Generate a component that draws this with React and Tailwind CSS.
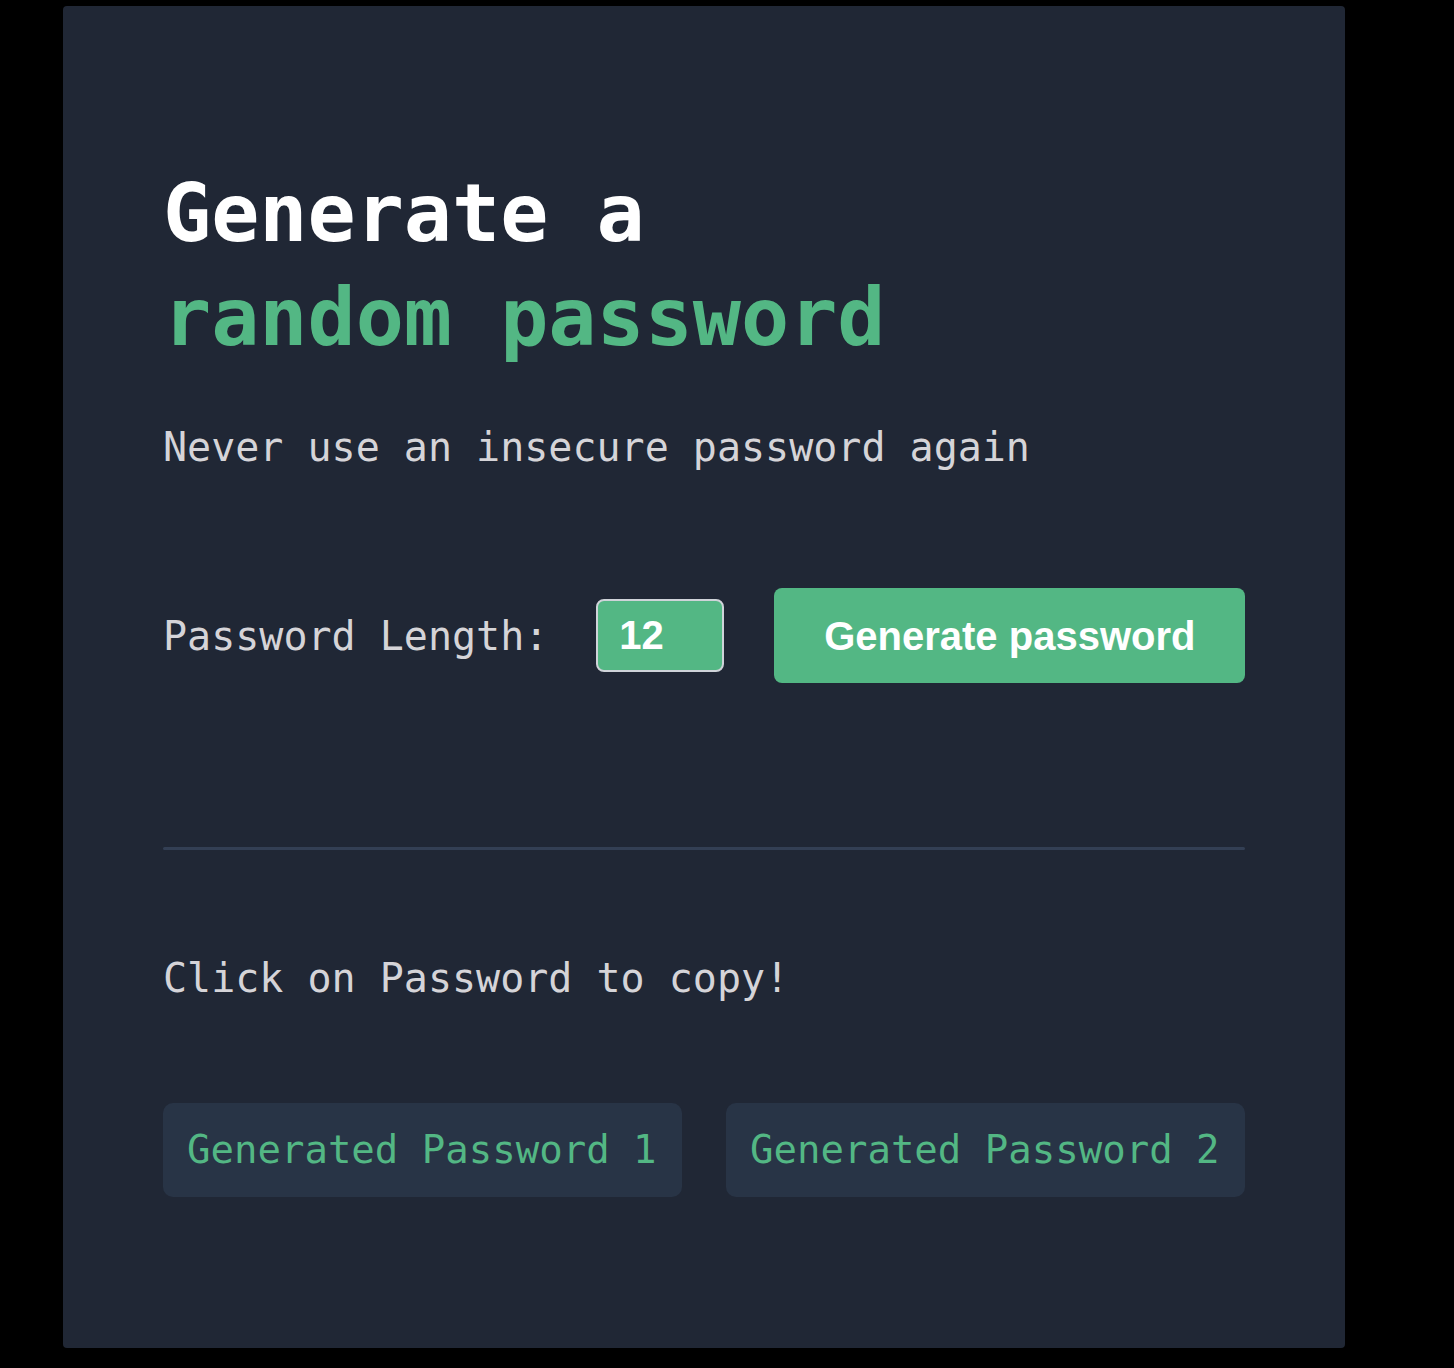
import { useState } from 'react'

const mono = { fontFamily: '"DejaVu Sans Mono", "Liberation Mono", monospace' }
const sans = { fontFamily: '"Liberation Sans", Arial, sans-serif' }

function App() {
  const [length, setLength] = useState(12)

  return (
    <div className="min-h-screen bg-black pt-[6px] pl-[63px] pb-[20px]">
      <div
        className="w-[1282px] h-[1342px] bg-[#202735] rounded-[4px] px-[100px] pt-[156px]"
        style={mono}
      >
        {/* Heading */}
        <h1 className="text-[80px] leading-[104px] font-bold text-white">
          Generate a
          <br />
          <span className="text-[#53b784]">random password</span>
        </h1>
        <p className="mt-[47px] text-[40px] leading-[60px] text-[#d5d4d8]">
          Never use an insecure password again
        </p>

        {/* Controls */}
        <div className="mt-[111px] flex items-center">
          <label className="shrink-0 whitespace-nowrap text-[40px] leading-[60px] text-[#d5d4d8]">
            Password Length:
          </label>
          <input
            type="number"
            value={length}
            onChange={e => setLength(e.target.value)}
            className="ml-[48px] shrink-0 w-[128px] h-[73px] bg-[#53b784] border-2 border-[#cfd3d9] rounded-[8px] pl-[21px] text-[40px] font-bold text-white outline-none [appearance:textfield] [&::-webkit-inner-spin-button]:appearance-none"
            style={sans}
          />
          <button
            className="ml-[50px] shrink-0 w-[471px] h-[95px] bg-[#53b784] rounded-[8px] text-[40px] font-bold text-white"
            style={sans}
          >
            Generate password
          </button>
        </div>

        {/* Divider */}
        <div className="mt-[164px] h-[3px] rounded-full bg-[#333f54]" />

        <p className="mt-[98px] text-[40px] leading-[60px] text-[#d5d4d8]">
          Click on Password to copy!
        </p>

        {/* Results */}
        <div className="mt-[95px] grid grid-cols-2 gap-[44px]">
          {['Generated Password 1', 'Generated Password 2'].map(p => (
            <div
              key={p}
              className="h-[94px] flex items-center pl-[24px] bg-[#283446] rounded-[10px] text-[39px] text-[#53b784] cursor-pointer"
            >
              {p}
            </div>
          ))}
        </div>
      </div>
    </div>
  )
}

export default App
